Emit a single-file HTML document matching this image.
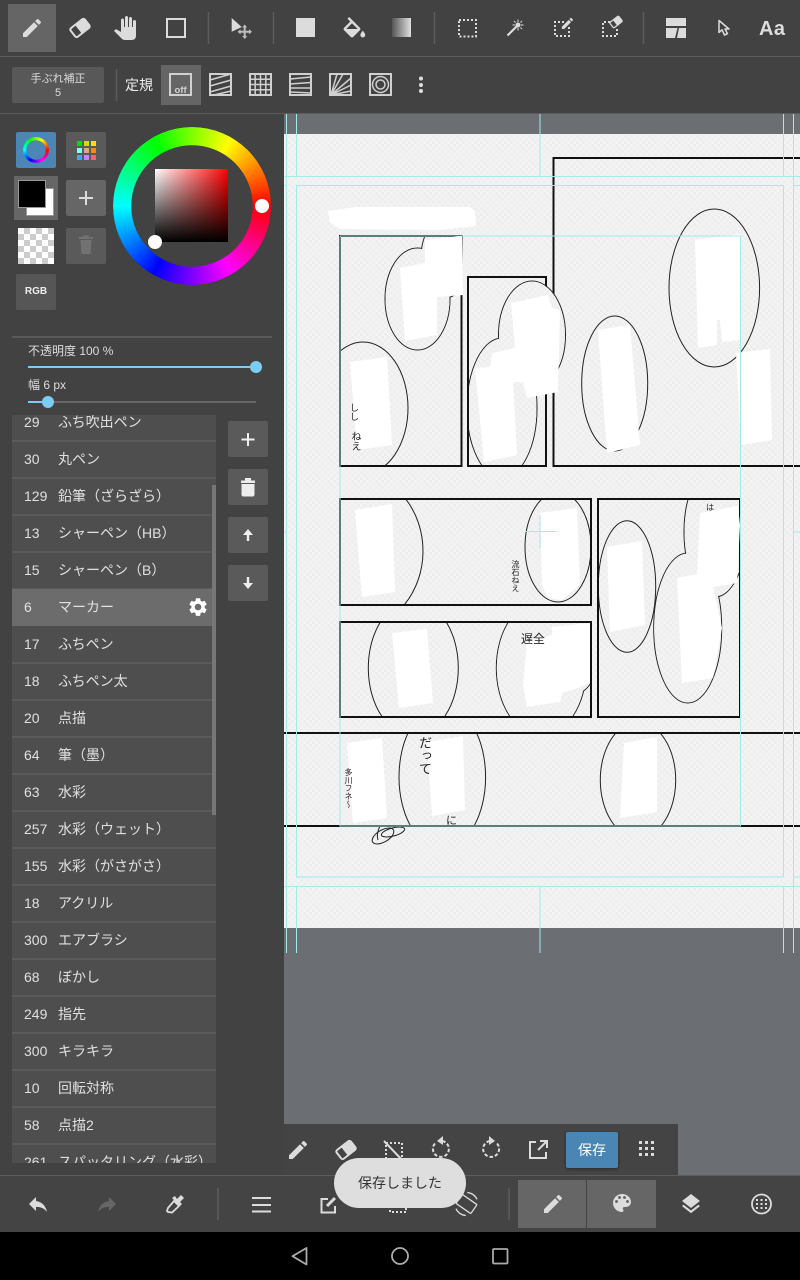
<!DOCTYPE html>
<html lang="ja"><head><meta charset="utf-8">
<style>
html,body{margin:0;padding:0;background:#424242}
body{position:relative;width:800px;height:1280px;overflow:hidden;font-family:"Liberation Sans","Noto Sans CJK JP",sans-serif;color:#ddd}
.a{position:absolute}
.b{position:absolute;border-radius:2px;background:#5a5a5a}
.t{position:absolute;white-space:nowrap}
.row{position:absolute;left:0;width:204px;height:35px;background:#4e4e4e;border-bottom:2px solid #5a5a5a;font-size:14px;line-height:35px;color:#e0e0e0}
.row span{position:absolute;white-space:nowrap}
.row .n{left:12px}.row .m{left:46px}
.v{position:absolute;writing-mode:vertical-rl;color:#222;white-space:nowrap;line-height:1}
</style></head><body>

<!-- canvas -->
<svg class="a" style="left:284px;top:113px" width="516" height="1062" viewBox="284 113 516 1062" fill="none">
<defs>
<pattern id="ck" width="6" height="6" patternUnits="userSpaceOnUse"><rect width="6" height="6" fill="#eeeeee"/><rect width="3" height="3" fill="#f3f3f3"/><rect x="3" y="3" width="3" height="3" fill="#f3f3f3"/></pattern>
<clipPath id="c1"><rect x="341" y="237" width="120" height="228"/></clipPath>
<clipPath id="c2"><rect x="469" y="278" width="76" height="187"/></clipPath>
<clipPath id="c4"><rect x="341" y="500" width="249" height="104"/></clipPath>
<clipPath id="c5"><rect x="341" y="623" width="249" height="93"/></clipPath>
<clipPath id="c6"><rect x="599" y="500" width="140" height="216"/></clipPath>
<clipPath id="c7"><rect x="284" y="734" width="516" height="91"/></clipPath>
</defs>
<rect x="284" y="113" width="516" height="1062" fill="#6b6e73"/>
<rect x="284" y="134" width="516" height="794" fill="url(#ck)"/>
<g stroke="#111" stroke-width="2">
<rect x="340" y="236" width="121.500" height="230"/>
<path d="M801 158H553.500V466H801"/>
<rect x="468" y="277" width="78" height="189"/>
<rect x="340" y="499" width="251" height="106"/>
<rect x="340" y="622" width="251" height="95"/>
<rect x="598" y="499" width="142" height="218"/>
<path d="M284 733H800M284 826H800"/>
</g>
<g stroke="#222" stroke-width="1">
<!-- P1 merged bubble -->
<g clip-path="url(#c1)"><ellipse cx="417.500" cy="299" rx="32.500" ry="51"/><ellipse cx="445" cy="258" rx="24" ry="40"/><g stroke="none" fill="url(#ck)"><ellipse cx="417.500" cy="299" rx="32" ry="50.500"/><ellipse cx="445" cy="258" rx="23.500" ry="39.500"/></g><ellipse cx="363" cy="408" rx="45" ry="66"/></g>
<!-- P2 merged bubble -->
<g clip-path="url(#c2)"><ellipse cx="502" cy="408" rx="35" ry="70"/></g>
<ellipse cx="532" cy="335" rx="33.500" ry="54"/>
<g stroke="none" fill="url(#ck)"><ellipse cx="532" cy="335" rx="33" ry="53.500"/><g clip-path="url(#c2)"><ellipse cx="502" cy="408" rx="34.500" ry="69.500"/></g></g>
<ellipse cx="614.700" cy="383.500" rx="33" ry="67.500" fill="url(#ck)"/>
<ellipse cx="714.300" cy="288" rx="45.300" ry="79"/>
<g clip-path="url(#c4)"><ellipse cx="355" cy="551" rx="68" ry="78"/><ellipse cx="558" cy="547" rx="33" ry="55"/></g>
<g clip-path="url(#c5)"><ellipse cx="413.300" cy="668" rx="45" ry="67.500"/><ellipse cx="541.300" cy="668" rx="45" ry="67.500"/><ellipse cx="570" cy="650" rx="30" ry="46"/><g stroke="none" fill="url(#ck)"><ellipse cx="541.300" cy="668" rx="44.500" ry="67"/><ellipse cx="570" cy="650" rx="29.500" ry="45.500"/></g></g>
<g clip-path="url(#c6)"><ellipse cx="715" cy="532" rx="31" ry="65"/><ellipse cx="687.700" cy="628" rx="34" ry="75"/><g stroke="none" fill="url(#ck)"><ellipse cx="715" cy="532" rx="30.500" ry="64.500"/><ellipse cx="687.700" cy="628" rx="33.500" ry="74.500"/></g><ellipse cx="627" cy="586.500" rx="28.700" ry="65.800"/></g>
<g clip-path="url(#c7)"><ellipse cx="442.300" cy="777" rx="43.300" ry="72"/><ellipse cx="638" cy="780" rx="37.700" ry="58"/></g>
<ellipse cx="383" cy="836" rx="12" ry="6" transform="rotate(-30 383 836)"/><ellipse cx="393" cy="832" rx="12" ry="4" transform="rotate(-15 393 832)"/><path d="M380 826q-4 8-2 14"/>
</g>
<g fill="#fff">
<path d="M328 211 355 207 470 207 475 212 476 226 440 230 340 229 330 222Z"/>
<path d="M400 268 425 263 425 240 462 236 463 295 437 297 437 335 405 341Z"/>
<path d="M350 362 387 357 392 445 357 450Z"/>
<path d="M511 303 548 295 552 308 560 310 558 392 527 398 523 382 513 382 517 455 484 462 475 368 490 367 492 353 515 348Z"/>
<path d="M598 330 630 325 640 445 607 453Z"/>
<path d="M695 240 740 234 740 340 722 342 720 320 717 320 717 345 698 348Z"/>
<path d="M736 353 770 349 772 440 741 445Z"/>
<path d="M355 510 392 504 395 592 362 597Z"/>
<path d="M540 513 577 508 580 585 562 600 548 598 542 585Z"/>
<path d="M392 633 427 629 433 703 399 708Z"/>
<path d="M527 642 552 635 552 627 590 623 590 682 578 688 562 693 560 702 527 707 523 685Z"/>
<path d="M607 547 642 541 645 625 610 632Z"/>
<path d="M700 513 738 506 740 525 737 583 713 587 722 628 713 678 682 683 677 578 697 574Z"/>
<path d="M347 743 382 738 387 818 353 823Z"/>
<path d="M427 742 463 736 465 810 432 816Z"/>
<path d="M624 743 657 737 657 812 620 818Z"/>
</g>
<g stroke="#a2ebe8" stroke-width="1">
<path d="M284 176.500H800M284 886.500H800"/>
<rect x="296.500" y="185.500" width="487" height="691.500"/>
<path d="M340 236V826H740.500V236H340M284 185.500H286M793 185.500H800M793 877H800M284 532H286M793 532H800"/>
<path d="M286.500 113V176M296.500 113V176M540 113V176M783.500 113V176M793.500 113V176M286.500 886V953M296.500 886V953M540 886V953M783.500 886V953M793.500 886V953"/>
<path d="M286.500 176V886M793.500 176V886"/>
<path d="M525 531.500H557M540 515V548"/>
</g>
</svg>
<div class="v" style="left:349px;top:403px;font-size:9px">しし</div>
<div class="v" style="left:349px;top:431px;font-size:10px">ねえ</div>
<div class="v" style="left:511px;top:560px;font-size:8px">流石ねえ</div>
<div class="v" style="left:344px;top:768px;font-size:8px">多川フネ〜</div>
<div class="v" style="left:418px;top:736px;font-size:13px">だって</div>
<div class="t" style="left:446px;top:812px;font-size:11px;color:#222">に</div>
<div class="t" style="left:521px;top:630px;font-size:12px;color:#222">遅全</div>
<div class="t" style="left:706px;top:502px;font-size:8px;color:#222">は</div>

<!-- left panel -->
<div class="a" style="left:0;top:0;width:284px;height:1232px;background:#424242"></div>
<div class="a" style="left:0;top:0;width:800px;height:113px;background:#424242"></div>
<div class="a" style="left:0;top:56px;width:800px;height:1px;background:#5c5c5c"></div>
<div class="a" style="left:0;top:113px;width:800px;height:1px;background:#5c5c5c"></div>
<div class="a" style="left:8px;top:4px;width:48px;height:48px;background:#656565"></div>
<div class="b" style="left:12px;top:67px;width:92px;height:36px;background:#585858"></div>
<div class="t" style="left:12px;top:72px;width:92px;text-align:center;font-size:11px;line-height:14px;color:#ddd">手ぶれ補正<br>5</div>
<div class="t" style="left:125px;top:76px;font-size:14px;line-height:18px;color:#eee">定規</div>
<div class="a" style="left:161px;top:65px;width:40px;height:40px;background:#656565"></div>

<!-- colour -->
<div class="a" style="left:113px;top:127px;width:158px;height:158px;border-radius:50%;background:conic-gradient(from 90deg,#f00,#f0f,#00f,#0ff,#0f0,#ff0,#f00);-webkit-mask:radial-gradient(circle,transparent 60.500px,#000 61px);mask:radial-gradient(circle,transparent 60.500px,#000 61px)"></div>
<div class="a" style="left:155px;top:169px;width:73px;height:73px;background:linear-gradient(to top,#000,rgba(0,0,0,0)),linear-gradient(to right,#fff,#f00)"></div>
<div class="a" style="left:255px;top:199px;width:14px;height:14px;border-radius:50%;background:#fff"></div>
<div class="a" style="left:148px;top:235px;width:14px;height:14px;border-radius:50%;background:#fff"></div>
<div class="b" style="left:16px;top:132px;width:40px;height:36px;background:#4b86b4"></div>
<div class="a" style="left:23px;top:137px;width:26px;height:26px;border-radius:50%;background:conic-gradient(from 90deg,#f00,#f0f,#00f,#0ff,#0f0,#ff0,#f00);-webkit-mask:radial-gradient(circle,transparent 9.500px,#000 10px);mask:radial-gradient(circle,transparent 9.500px,#000 10px)"></div>
<div class="b" style="left:66px;top:132px;width:40px;height:36px"></div>
<svg class="a" style="left:77px;top:141px" width="19" height="19"><g><rect width="5" height="5" fill="#00e000"/><rect x="7" width="5" height="5" fill="#cce000"/><rect x="14" width="5" height="5" fill="#ffe000"/><rect y="7" width="5" height="5" fill="#80ffff"/><rect x="7" y="7" width="5" height="5" fill="#d8a888"/><rect x="14" y="7" width="5" height="5" fill="#ff8800"/><rect y="14" width="5" height="5" fill="#40a8f0"/><rect x="7" y="14" width="5" height="5" fill="#c088ff"/><rect x="14" y="14" width="5" height="5" fill="#ff6060"/></g></svg>
<div class="a" style="left:14px;top:176px;width:44px;height:44px;background:#666"></div>
<div class="a" style="left:26px;top:188px;width:26px;height:26px;background:#fff;border:1px solid #999"></div>
<div class="a" style="left:18px;top:180px;width:26px;height:26px;background:#000;border:1px solid #999"></div>
<div class="b" style="left:66px;top:180px;width:40px;height:36px;background:#666"></div>
<div class="a" style="left:18px;top:228px;width:36px;height:36px;background:repeating-conic-gradient(#ccc 0 25%,#fff 0 50%) 0 0/12px 12px"></div>
<div class="b" style="left:66px;top:228px;width:40px;height:36px"></div>
<div class="b" style="left:16px;top:274px;width:40px;height:36px;background:#565656"></div>
<div class="t" style="left:16px;top:284px;width:40px;text-align:center;font-size:10px;font-weight:bold;line-height:16px;color:#eee">RGB</div>
<div class="a" style="left:12px;top:336px;width:260px;height:2px;background:#5a5a5a"></div>
<div class="t" style="left:28px;top:343px;font-size:12px;line-height:16px;color:#ddd">不透明度 100 %</div>
<div class="a" style="left:28px;top:366px;width:228px;height:2px;background:#7ccdf3"></div>
<div class="a" style="left:250px;top:361px;width:12px;height:12px;border-radius:50%;background:#7ccdf3"></div>
<div class="t" style="left:28px;top:377px;font-size:12px;line-height:16px;color:#ddd">幅 6 px</div>
<div class="a" style="left:28px;top:401px;width:228px;height:2px;background:#666"></div>
<div class="a" style="left:28px;top:401px;width:20px;height:2px;background:#7ccdf3"></div>
<div class="a" style="left:42px;top:396px;width:12px;height:12px;border-radius:50%;background:#7ccdf3"></div>

<!-- list -->
<div class="a" style="left:12px;top:415px;width:204px;height:748px;overflow:hidden;background:#4e4e4e">
<div class="row" style="top:-10px"><span class="n">29</span><span class="m">ふち吹出ペン</span></div>
<div class="row" style="top:27px"><span class="n">30</span><span class="m">丸ペン</span></div>
<div class="row" style="top:64px"><span class="n">129</span><span class="m">鉛筆（ざらざら）</span></div>
<div class="row" style="top:101px"><span class="n">13</span><span class="m">シャーペン（HB）</span></div>
<div class="row" style="top:138px"><span class="n">15</span><span class="m">シャーペン（B）</span></div>
<div class="row" style="top:212px"><span class="n">17</span><span class="m">ふちペン</span></div>
<div class="row" style="top:174px;height:37px;line-height:37px;border-bottom:0;background:#6c6c6c"><span class="n">6</span><span class="m">マーカー</span></div>
<div class="row" style="top:249px"><span class="n">18</span><span class="m">ふちペン太</span></div>
<div class="row" style="top:286px"><span class="n">20</span><span class="m">点描</span></div>
<div class="row" style="top:323px"><span class="n">64</span><span class="m">筆（墨）</span></div>
<div class="row" style="top:360px"><span class="n">63</span><span class="m">水彩</span></div>
<div class="row" style="top:397px"><span class="n">257</span><span class="m">水彩（ウェット）</span></div>
<div class="row" style="top:434px"><span class="n">155</span><span class="m">水彩（がさがさ）</span></div>
<div class="row" style="top:471px"><span class="n">18</span><span class="m">アクリル</span></div>
<div class="row" style="top:508px"><span class="n">300</span><span class="m">エアブラシ</span></div>
<div class="row" style="top:545px"><span class="n">68</span><span class="m">ぼかし</span></div>
<div class="row" style="top:582px"><span class="n">249</span><span class="m">指先</span></div>
<div class="row" style="top:619px"><span class="n">300</span><span class="m">キラキラ</span></div>
<div class="row" style="top:656px"><span class="n">10</span><span class="m">回転対称</span></div>
<div class="row" style="top:693px"><span class="n">58</span><span class="m">点描2</span></div>
<div class="row" style="top:730px"><span class="n">261</span><span class="m">スパッタリング（水彩）</span></div>
<div class="a" style="left:200px;top:70px;width:4px;height:330px;background:#777"></div>
</div>
<div class="b" style="left:228px;top:421px;width:40px;height:36px"></div>
<div class="b" style="left:228px;top:469px;width:40px;height:36px"></div>
<div class="b" style="left:228px;top:517px;width:40px;height:36px"></div>
<div class="b" style="left:228px;top:565px;width:40px;height:36px"></div>

<!-- bottom -->
<div class="a" style="left:284px;top:1124px;width:394px;height:51px;background:#444"></div>
<div class="b" style="left:566px;top:1132px;width:52px;height:36px;background:#4a86b4;box-shadow:0 1px 3px rgba(0,0,0,.4)"></div>
<div class="t" style="left:566px;top:1141px;width:52px;text-align:center;font-size:14px;line-height:18px;color:#fff">保存</div>
<div class="a" style="left:0;top:1175px;width:800px;height:57px;background:#444;border-top:1px solid #5c5c5c;box-sizing:border-box"></div>
<div class="a" style="left:518px;top:1180px;width:68px;height:48px;background:#666"></div>
<div class="a" style="left:587px;top:1180px;width:69px;height:48px;background:#666"></div>
<div class="a" style="left:0;top:1232px;width:800px;height:48px;background:#000"></div>

<!-- icons -->
<svg class="a" style="left:0;top:0" width="800" height="1280" fill="none">
<defs>
<path id="pen" fill="#dcdcdc" d="M3 17.250V21h3.750L17.810 9.940l-3.750-3.750L3 17.250zM20.710 7.040c.39-.39.39-1.020 0-1.410l-2.340-2.340c-.39-.39-1.020-.39-1.410 0l-1.830 1.830 3.750 3.750 1.830-1.830z"/>
<g id="era"><rect x="-9" y="-5.500" width="18" height="11" rx="2" stroke="#dcdcdc" stroke-width="2"/><path d="M-2-6H7.500A2.500 2.500 0 0 1 10-3.500V3.500A2.500 2.500 0 0 1 7.500 6H-2Z" fill="#dcdcdc"/></g>
<linearGradient id="gr"><stop offset="0" stop-color="#555"/><stop offset="1" stop-color="#e0e0e0"/></linearGradient>
</defs>
<!-- top row -->
<use href="#pen" x="20" y="16"/>
<use href="#era" transform="translate(80 28) rotate(-38)"/>
<path transform="translate(113 16)" fill="#dcdcdc" d="M23 5.500V20c0 2.200-1.800 4-4 4h-7.300c-1.080 0-2.100-.43-2.850-1.190L1 14.830s1.260-1.230 1.300-1.250c.22-.19.490-.29.790-.29.220 0 .42.060.6.160.040.010 4.310 2.460 4.310 2.460V4c0-.83.670-1.500 1.500-1.500S11 3.170 11 4v7h1V1.500c0-.83.670-1.500 1.500-1.500S15 .67 15 1.500V11h1V2.500c0-.83.670-1.500 1.500-1.500s1.500.67 1.500 1.500V11h1V5.500c0-.83.670-1.500 1.500-1.500s1.500.67 1.500 1.500z"/>
<rect x="167" y="19" width="18" height="18" stroke="#dcdcdc" stroke-width="2"/>
<g stroke="#5c5c5c"><path d="M208.500 12V44M273.500 12V44M434.500 12V44M643.500 12V44M116.500 69V101M218 1188V1220M509 1188V1220" stroke-width="1.500"/></g>
<path d="M231.700 18V31.700L241.700 27Z" fill="#dcdcdc"/>
<path d="M244.700 27.500V36M240.500 31.700H249" stroke="#bdbdbd" stroke-width="2"/><path d="M244.700 24.500l2.500 3h-5zM244.700 39l2.500-3h-5zM237.500 31.700l3-2.500v5zM252 31.700l-3-2.500v5z" fill="#bdbdbd"/>
<rect x="296" y="18" width="19" height="19" fill="#dcdcdc"/>
<path transform="translate(340 17) scale(1.200)" fill="#dcdcdc" d="M16.560 8.940L7.620 0 6.210 1.410l2.380 2.380-5.150 5.150c-.59.590-.59 1.540 0 2.120l5.500 5.500c.29.290.68.440 1.060.44s.77-.15 1.060-.44l5.500-5.500c.59-.58.59-1.530 0-2.120zM5.210 10L10 5.210 14.790 10H5.210zM19 11.500s-2 2.170-2 3.500c0 1.100.9 2 2 2s2-.9 2-2c0-1.330-2-3.500-2-3.500z"/>
<rect x="392" y="18" width="19" height="19" fill="url(#gr)"/>
<rect x="459" y="20" width="17" height="16.500" stroke="#dcdcdc" stroke-width="2" stroke-dasharray="2 2"/>
<path d="M507.500 35.500L517 26" stroke="#dcdcdc" stroke-width="2.200"/><circle cx="518" cy="25" r="2.500" fill="#dcdcdc"/><path d="M518 19.500V22M518 28V30.500M512.500 25H515M521 25H523.500M514 21l1.500 1.500M522 21l-1.500 1.500M522 29l-1.500-1.500" stroke="#dcdcdc"/>
<path d="M564 22H555V36H569V27" stroke="#dcdcdc" stroke-width="2" stroke-dasharray="2 2"/>
<use href="#pen" transform="translate(560 16) scale(.62)"/>
<path d="M610 22H603V36H617V29" stroke="#dcdcdc" stroke-width="2" stroke-dasharray="2 2"/>
<use href="#era" transform="translate(616 22) rotate(-38) scale(.62)"/>
<path d="M666 18H686V26H666ZM666 28H686V38H677L679 28H677.500L675 38H666Z" fill="#dcdcdc"/>
<path d="M719 20.500V32.500L722 29.800 724.500 35 727.500 33.700 725 29H729Z" stroke="#dcdcdc" stroke-width="1.500" stroke-linejoin="round"/>
<text x="759" y="35" font-family="Liberation Sans" font-size="20" font-weight="bold" fill="#dcdcdc" textLength="26">Aa</text>
<!-- rulers -->
<rect x="170" y="74" width="21" height="21" stroke="#d0d0d0" stroke-width="2"/>
<text x="174.500" y="93" font-family="Liberation Sans" font-size="9.500" font-weight="bold" fill="#d0d0d0">off</text>
<g stroke="#d0d0d0" stroke-width="1.500">
<rect x="210" y="74" width="21" height="21" stroke-width="2"/><path d="M210 80L231 74M210 86L231 80M210 92L231 86M214 95L231 91"/>
<rect x="250" y="74" width="21" height="21" stroke-width="2"/><path d="M255.200 74V95M260.500 74V95M265.800 74V95M250 79.200H271M250 84.500H271M250 89.800H271"/>
<rect x="290" y="74" width="21" height="21" stroke-width="2"/><path d="M290 79L311 77M290 84L311 82.500M290 88L311 88M290 92L311 93"/>
<rect x="330" y="74" width="21" height="21" stroke-width="2"/><path d="M331 95L337 74M331 95L343 74M331 95L351 78M331 95L351 85M331 95L351 91"/>
<rect x="370" y="74" width="21" height="21" stroke-width="2"/><circle cx="380.500" cy="84.500" r="8"/><circle cx="380.500" cy="84.500" r="4.500"/>
</g>
<circle cx="421" cy="78.500" r="2" fill="#ddd"/><circle cx="421" cy="85" r="2" fill="#ddd"/><circle cx="421" cy="91" r="2" fill="#ddd"/>
<!-- side -->
<path d="M86 191V205M79 198H93" stroke="#ddd" stroke-width="2"/>
<path d="M79 238H93M83 238V235.500H89V238M80.500 240H91.500L90.500 254H81.500Z" fill="#727272"/><path d="M79 238H93" stroke="#727272" stroke-width="2"/>
<path d="M248 433V446M241.500 439.500H254.500" stroke="#eee" stroke-width="2"/>
<path d="M241 480.500H255V483H241ZM245 478H251V480.500H245ZM241.500 484H254.500V495A2 2 0 0 1 252.500 496.500H243.500A2 2 0 0 1 241.500 495Z" fill="#eee"/>
<path d="M248 529L243 535H246.800V541H249.200V535H253Z" fill="#eee"/>
<path d="M246.800 577V583H243L248 589 253 583H249.200V577Z" fill="#eee"/>
<path transform="translate(187 596) scale(.92)" fill="#fff" d="M19.140 12.940c.040-.3.060-.61.060-.94 0-.32-.020-.64-.070-.94l2.030-1.580c.18-.14.230-.41.120-.61l-1.920-3.320c-.12-.22-.37-.29-.59-.22l-2.390.96c-.5-.38-1.030-.7-1.620-.94l-.36-2.540c-.040-.24-.24-.41-.48-.41h-3.840c-.24 0-.43.170-.47.410l-.36 2.540c-.59.240-1.130.57-1.620.94l-2.390-.96c-.22-.08-.47 0-.59.220L2.740 8.870c-.12.210-.08.470.12.610l2.030 1.580c-.05.3-.09.630-.09.940s.020.640.070.940l-2.030 1.580c-.18.140-.23.410-.12.610l1.920 3.320c.12.220.37.290.59.220l2.390-.96c.5.380 1.030.7 1.620.94l.36 2.540c.050.240.24.410.48.410h3.840c.24 0 .44-.17.47-.41l.36-2.540c.59-.24 1.130-.56 1.620-.94l2.390.96c.22.080.47 0 .59-.22l1.920-3.320c.12-.22.070-.47-.12-.61l-2.010-1.580zM12 15.600c-1.980 0-3.600-1.620-3.600-3.600s1.620-3.600 3.600-3.600 3.600 1.620 3.600 3.600-1.620 3.600-3.600 3.600z"/>
<!-- floating bar -->
<use href="#pen" x="286" y="1138"/>
<use href="#era" transform="translate(346 1150) rotate(-38)"/>
<rect x="386" y="1143" width="16" height="16" stroke="#dcdcdc" stroke-width="2" stroke-dasharray="2 2"/>
<path d="M384 1141L404 1162" stroke="#dcdcdc" stroke-width="2"/>
<path d="M435 1143.500A8 8 0 1 0 442 1141" stroke="#dcdcdc" stroke-width="2" stroke-dasharray="3.500 2"/><path d="M443 1136V1145L437 1141Z" fill="#dcdcdc"/>
<path d="M497 1143.500A8 8 0 1 1 490 1141" stroke="#dcdcdc" stroke-width="2" stroke-dasharray="3.500 2"/><path d="M489 1136V1145L495 1141Z" fill="#dcdcdc"/>
<path d="M536 1142H530V1158H546V1152M538 1150L546 1142M540 1141H547V1148" stroke="#dcdcdc" stroke-width="2"/>
<g fill="#dcdcdc"><rect x="639" y="1141" width="3" height="3"/><rect x="645" y="1141" width="3" height="3"/><rect x="651" y="1141" width="3" height="3"/><rect x="639" y="1147" width="3" height="3"/><rect x="645" y="1147" width="3" height="3"/><rect x="651" y="1147" width="3" height="3"/><rect x="639" y="1153" width="3" height="3"/><rect x="645" y="1153" width="3" height="3"/><rect x="651" y="1153" width="3" height="3"/></g>
<!-- bottom bar -->
<path transform="translate(26 1192)" fill="#dcdcdc" d="M10 9V5l-7 7 7 7v-4.100c5 0 8.500 1.600 11 5.100-1-5-4-10-11-11z"/>
<path transform="translate(119 1192) scale(-1 1)" fill="#666" d="M10 9V5l-7 7 7 7v-4.100c5 0 8.500 1.600 11 5.100-1-5-4-10-11-11z"/>
<path d="M168 1212L167 1211 168 1208 174 1201 179 1206 172 1212.500Z" stroke="#dcdcdc" stroke-width="1.800"/><path d="M172 1198L176 1202 180 1206 182 1204 180 1202 184 1198 181 1195 177 1199 175 1196Z" fill="#dcdcdc"/>
<path d="M252 1198H271M252 1205H271M252 1211.500H271" stroke="#dcdcdc" stroke-width="2"/>
<path d="M328 1199H321.500V1212.500H335V1206" stroke="#dcdcdc" stroke-width="2"/><path d="M327 1206L335 1198" stroke="#dcdcdc" stroke-width="3"/>
<rect x="390" y="1196" width="16" height="16" stroke="#dcdcdc" stroke-width="2" stroke-dasharray="2 2"/>
<g transform="translate(466.500 1204) rotate(35)" stroke="#dcdcdc" stroke-width="1.300"><rect x="-9" y="-5.500" width="18" height="11" rx="1"/><path d="M-6-9.800A11.500 11.500 0 0 1 6-9.800M6 9.800A11.500 11.500 0 0 1-6 9.800"/></g>
<use href="#pen" x="541" y="1192"/>
<path transform="translate(610 1191)" fill="#dcdcdc" d="M12 3c-4.970 0-9 4.030-9 9s4.030 9 9 9c.83 0 1.500-.67 1.500-1.500 0-.39-.15-.74-.39-1.010-.23-.26-.38-.61-.38-.99 0-.83.670-1.500 1.500-1.500H16c2.760 0 5-2.240 5-5 0-4.420-4.030-8-9-8zm-5.500 9c-.83 0-1.500-.67-1.500-1.500S5.670 9 6.500 9 8 9.670 8 10.500 7.330 12 6.500 12zm3-4C8.670 8 8 7.330 8 6.500S8.670 5 9.500 5s1.500.67 1.500 1.500S10.330 8 9.500 8zm5 0c-.83 0-1.500-.67-1.500-1.500S13.670 5 14.500 5s1.500.67 1.500 1.500S15.330 8 14.500 8zm3 4c-.83 0-1.500-.67-1.500-1.500S16.670 9 17.500 9s1.500.67 1.500 1.500-.67 1.500-1.500 1.500z"/>
<path transform="translate(679 1192)" fill="#dcdcdc" d="M11.990 18.540l-7.370-5.730L3 14.070l9 7 9-7-1.630-1.270-7.380 5.740zM12 16l7.360-5.730L21 9l-9-7-9 7 1.630 1.270L12 16z"/>
<circle cx="761.500" cy="1204" r="9.500" stroke="#dcdcdc" stroke-width="1.800"/>
<g fill="#dcdcdc"><rect x="756" y="1199" width="2" height="2"/><rect x="760.500" y="1199" width="2" height="2"/><rect x="765" y="1199" width="2" height="2"/><rect x="756" y="1203" width="2" height="2"/><rect x="760.500" y="1203" width="2" height="2"/><rect x="765" y="1203" width="2" height="2"/><rect x="756" y="1207" width="2" height="2"/><rect x="760.500" y="1207" width="2" height="2"/><rect x="765" y="1207" width="2" height="2"/></g>
<!-- nav -->
<path d="M306.500 1248V1264.500L292.500 1256.200Z" stroke="#aaa" stroke-width="1.800" stroke-linejoin="round"/>
<circle cx="400" cy="1256" r="8" stroke="#aaa" stroke-width="1.800"/>
<rect x="493" y="1249" width="14.500" height="14.500" rx="1" stroke="#aaa" stroke-width="1.800"/>
</svg>

<!-- toast -->
<div class="a" style="left:334px;top:1158px;width:132px;height:50px;border-radius:25px;background:#dedede"></div>
<div class="t" style="left:334px;top:1174px;width:132px;text-align:center;font-size:14px;line-height:18px;color:#333">保存しました</div>
</body></html>
